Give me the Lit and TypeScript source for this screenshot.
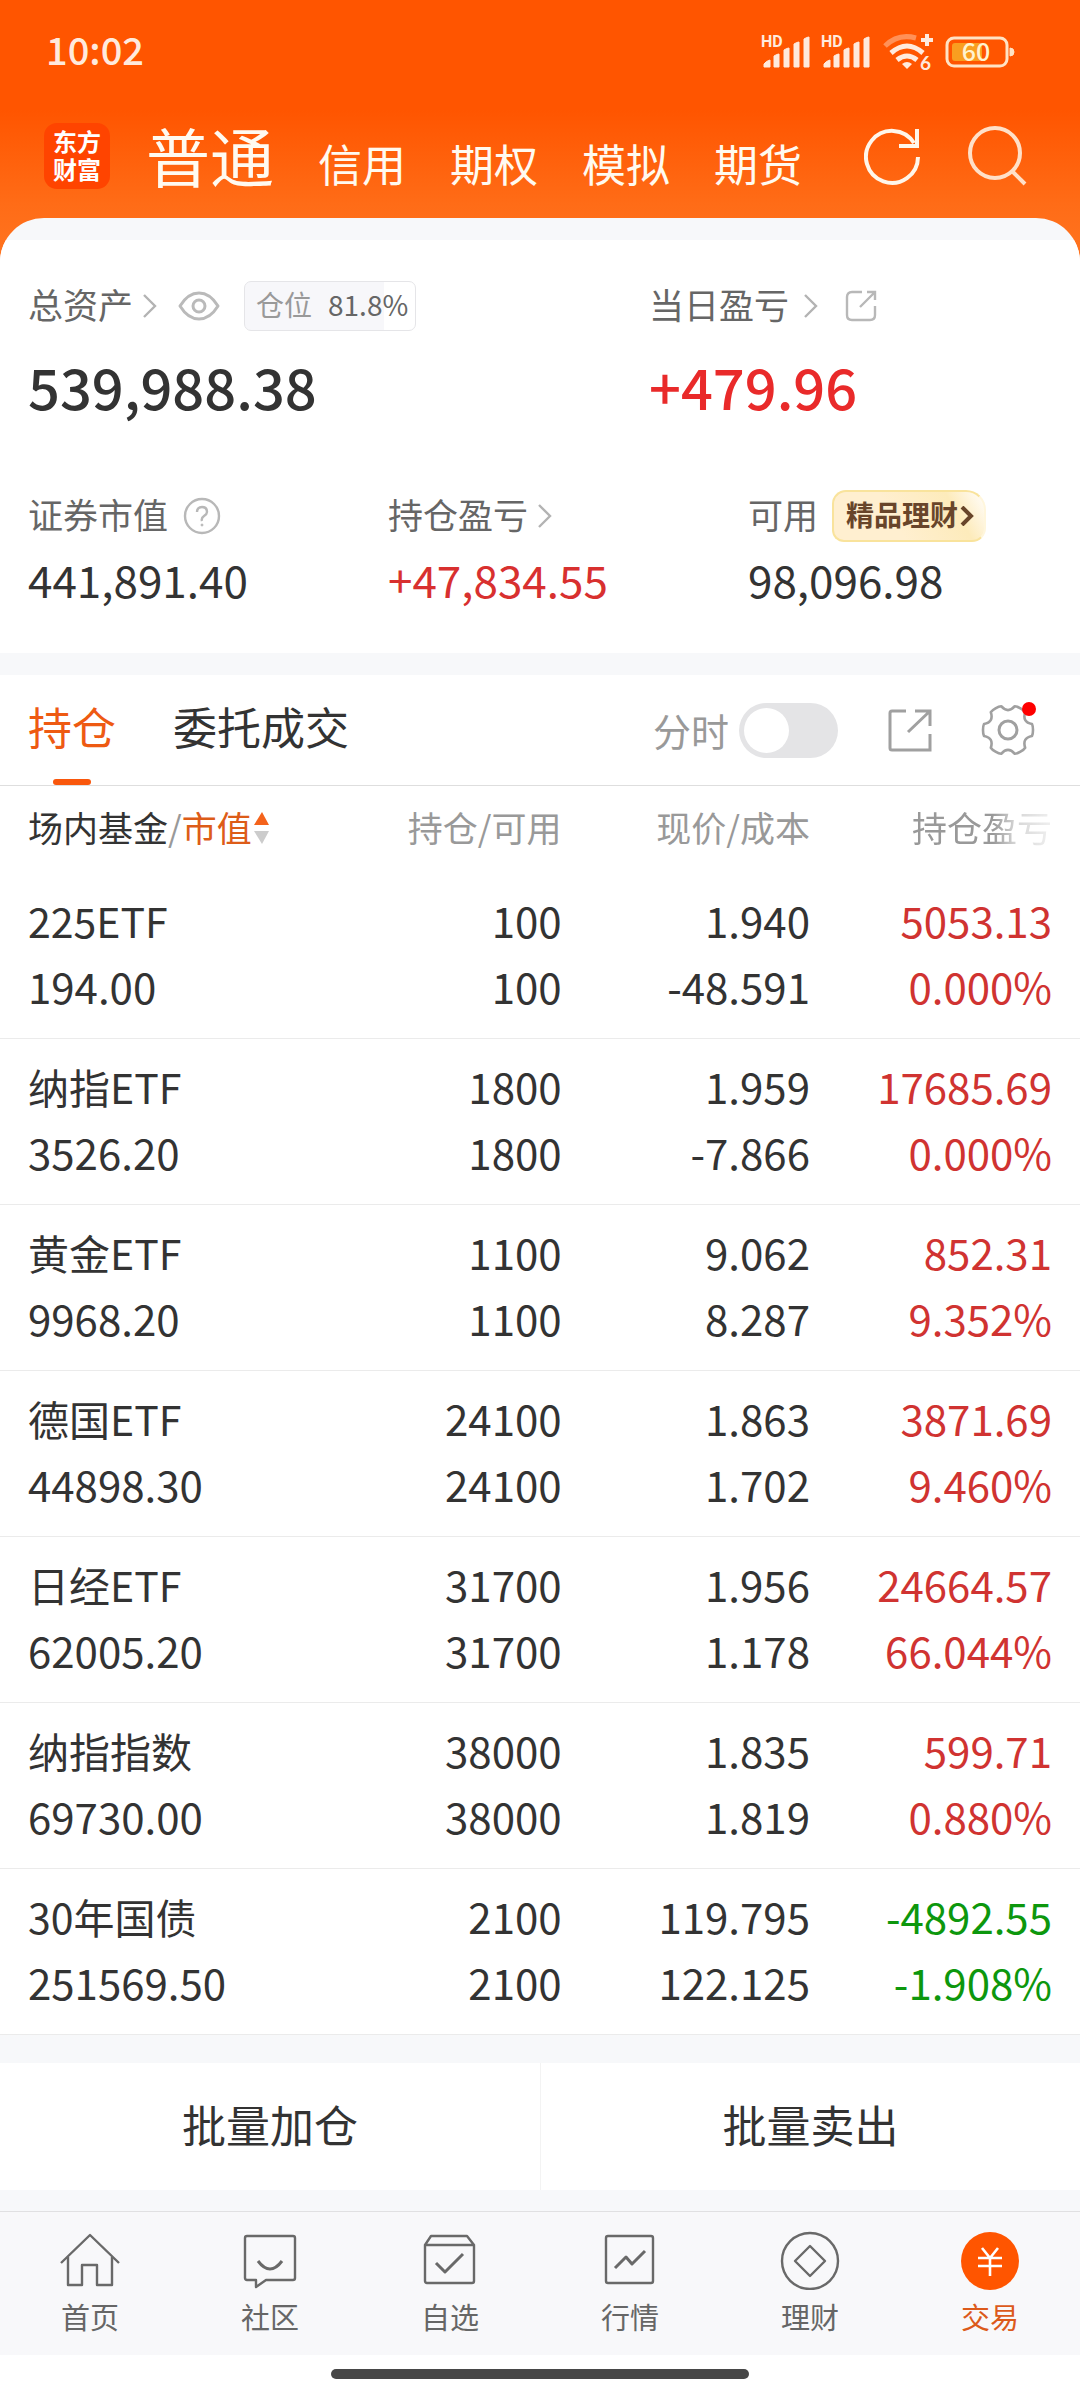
import { LitElement, html, svg, css } from "lit";
import { customElement, property, state } from "lit/decorators.js";
import { classMap } from "lit/directives/class-map.js";

interface Holding {
  name: string;
  value: string;
  held: string;
  usable: string;
  price: string;
  cost: string;
  profit: string;
  rate: string;
}

const HOLDINGS: Holding[] = [
  { name: "225ETF", value: "194.00", held: "100", usable: "100", price: "1.940", cost: "-48.591", profit: "5053.13", rate: "0.000%" },
  { name: "纳指ETF", value: "3526.20", held: "1800", usable: "1800", price: "1.959", cost: "-7.866", profit: "17685.69", rate: "0.000%" },
  { name: "黄金ETF", value: "9968.20", held: "1100", usable: "1100", price: "9.062", cost: "8.287", profit: "852.31", rate: "9.352%" },
  { name: "德国ETF", value: "44898.30", held: "24100", usable: "24100", price: "1.863", cost: "1.702", profit: "3871.69", rate: "9.460%" },
  { name: "日经ETF", value: "62005.20", held: "31700", usable: "31700", price: "1.956", cost: "1.178", profit: "24664.57", rate: "66.044%" },
  { name: "纳指指数", value: "69730.00", held: "38000", usable: "38000", price: "1.835", cost: "1.819", profit: "599.71", rate: "0.880%" },
  { name: "30年国债", value: "251569.50", held: "2100", usable: "2100", price: "119.795", cost: "122.125", profit: "-4892.55", rate: "-1.908%" },
];

/* Outline of a six-lobed gear centred on (cx, cy). */
function gearPath(cx: number, cy: number): string {
  const at = (x: number, y: number, deg: number) => {
    const a = (deg * Math.PI) / 180;
    const px = cx + x * Math.cos(a) - y * Math.sin(a);
    const py = cy + x * Math.sin(a) + y * Math.cos(a);
    return `${px.toFixed(1)} ${py.toFixed(1)}`;
  };
  let d = `M${at(24, -6, 0)}`;
  for (let k = 0; k < 6; k++) {
    const deg = k * 60;
    d += `Q${at(25, -4, deg)} ${at(25, 0, deg)}Q${at(25, 4, deg)} ${at(24, 6, deg)}`;
    d += `Q${at(16, 0, deg + 30)} ${at(24, -6, deg + 60)}`;
  }
  return d + "Z";
}

const chevron = html`<svg class="chevron" viewBox="0 0 14 24" width="14" height="24" aria-hidden="true">
  <path d="M1 1L12 12L1 23" fill="none" stroke="#b3b3b3" stroke-width="2.4" />
</svg>`;

const signal = (x: number) => svg`
  <text x="${x}" y="15" class="hd">HD</text>
  <path d="M${x + 3} 35V32Q${x + 5} 29 ${x + 9} 28V35ZM${x + 13} 35V24Q${x + 16} 22 ${x + 18} 22V35ZM${x + 23} 35V18Q${x + 26} 16 ${x + 28} 16V35ZM${x + 33} 35V12Q${x + 36} 10 ${x + 38} 10V35ZM${x + 43} 35V7Q${x + 46} 5 ${x + 48} 5V35Z"
    fill="#ffeadd" stroke="#ffeadd" stroke-width="1" stroke-linejoin="round" />`;

const TAB_ICONS = {
  home: svg`<path d="M1 35L30 7L59 35M8 29V57H22V37H37V57H52V29" />`,
  community: svg`<path d="M7 8H53Q55 8 55 10V50Q55 52 53 52H26L16 59V52H7Q5 52 5 50V10Q5 8 7 8Z" /><path d="M18 33Q30 49 42 33" stroke-width="3" />`,
  watch: svg`<path d="M5 17L11 8H47L54 17V53Q54 55 52 55H7Q5 55 5 53ZM5 17H54" /><path d="M16 35L25 44L43 26" stroke-width="3" />`,
  market: svg`<rect x="6" y="8" width="47" height="47" rx="2" /><path d="M15 40L26 29L32 36L45 23" stroke-width="3" />`,
  wealth: svg`<circle cx="30" cy="33" r="28" /><path d="M30 18L45 33L30 48L15 33Z" />`,
  trade: svg`<circle cx="30" cy="33" r="29" fill="#ff5500" stroke="none" /><path d="M22 20L30 30L38 20M18 30H42M18 38H42M30 30V48" stroke="#fff" stroke-width="2.6" />`,
};

@customElement("status-bar")
class StatusBar extends LitElement {
  static styles = css`
    :host { display: block; }
    .bar { display: flex; align-items: center; justify-content: space-between; padding: 19px 64px 23px 46px; color: #ffeadd; }
    .time { font-size: 38px; line-height: 60px; font-weight: 500; }
    .hd { font: 700 16px Roboto, "Liberation Sans", sans-serif; fill: #ffeadd; }
    .six { font: 700 19px Lato, sans-serif; fill: #ffeadd; }
    .level { font: 500 25px "Noto Sans CJK SC", sans-serif; fill: #fff3d0; }
    svg { display: block; margin-top: 8px; }
  `;
  render() {
    return html`<div class="bar">
      <span class="time">10:02</span>
      <svg width="256" height="42" viewBox="0 0 256 42" role="img" aria-label="信号与电量">
        ${signal(1)} ${signal(61)}
        <g fill="none" stroke="#ffeadd" stroke-width="5">
          <path d="M125 14Q138 1 156 6" opacity="0.4" />
          <path d="M131 21Q147 7 163 21" />
          <path d="M137 28Q147 20 157 28" />
          <path d="M161 8H173M167 2V14" stroke-width="4" />
        </g>
        <path d="M142 32Q147 28 152 32L147 37Z" fill="#ffeadd" />
        <text x="160" y="38" class="six">6</text>
        <rect x="187" y="6" width="60" height="28" rx="7" fill="none" stroke="#ffe3c4" stroke-width="3" />
        <rect x="192" y="11" width="30" height="18" rx="3" fill="#f99e20" />
        <path d="M250 16Q254 16 254 20Q254 24 250 24Z" fill="#ffe3c4" stroke="#ffe3c4" />
        <text x="216" y="29" text-anchor="middle" class="level">60</text>
      </svg>
    </div>`;
  }
}

@customElement("top-bar")
class TopBar extends LitElement {
  static styles = css`
    :host { display: block; }
    .bar { display: flex; align-items: center; padding: 18px 52px 26px 44px; }
    .logo { display: block; width: 48px; padding: 4px 9px 6px; border-radius: 13px; background: #ff4400; color: #fff; font-size: 24px; line-height: 28px; font-weight: 700; text-decoration: none; }
    .accounts { display: flex; align-items: baseline; gap: 44px; padding: 0 0 4px 36px; }
    .accounts a { color: #fffaf0; font-size: 44px; line-height: 48px; text-decoration: none; white-space: nowrap; }
    .accounts .current { font-size: 64px; line-height: 68px; }
    .tools { display: flex; gap: 44px; margin-left: auto; }
    button { display: block; padding: 0; border: 0; background: none; }
    svg { display: block; }
  `;
  render() {
    return html`<div class="bar">
      <a class="logo" href="#home">东方财富</a>
      <nav class="accounts" aria-label="账户类型">
        <a class="current" href="#normal" aria-current="page">普通</a>
        <a href="#credit">信用</a>
        <a href="#option">期权</a>
        <a href="#demo">模拟</a>
        <a href="#futures">期货</a>
      </nav>
      <div class="tools">
        <button aria-label="刷新">
          <svg width="60" height="60" viewBox="0 0 60 60" fill="none" stroke="#fff6ea" stroke-width="4">
            <path d="M54 31A26 26 0 1 1 50 17M53 3V20H35" />
          </svg>
        </button>
        <button aria-label="搜索">
          <svg width="60" height="60" viewBox="0 0 60 60" fill="none" stroke="#ffe0c8" stroke-width="4">
            <circle cx="27" cy="27" r="25" /><path d="M44 45L57 58" />
          </svg>
        </button>
      </div>
    </div>`;
  }
}

@customElement("account-summary")
class AccountSummary extends LitElement {
  static styles = css`
    :host { display: block; background: #fff; }
    .totals { display: grid; grid-template-columns: 621fr 459fr; padding-top: 41px; }
    .details { display: grid; grid-template-columns: repeat(3, 1fr); padding: 72px 0 48px; }
    .cell { padding-left: 28px; white-space: nowrap; }
    .row { display: flex; align-items: center; min-height: 50px; }
    .details .row { min-height: 52px; }
    .label { display: flex; align-items: center; color: #666; font-size: 35px; line-height: 40px; text-decoration: none; }
    .label span { padding-bottom: 5px; }
    .near { gap: 10px; }
    .far { gap: 15px; }
    .total { margin-top: 23px; font-size: 56px; line-height: 64px; font-weight: 500; color: #333; }
    .amount { margin-top: 11px; font-size: 44px; line-height: 52px; color: #333; }
    .up { color: #e92a2a; }
    .amount.up { color: #d8302f; }
    button { display: block; padding: 0; border: 0; background: none; font: inherit; }
    svg { display: block; }
    .eye { margin-left: 21px; }
    .share { margin-left: 27px; }
    .help { margin-left: 15px; }
    .ratio { display: flex; gap: 16px; margin-left: 24px; padding: 0 7px 4px 11px; border: 1px solid #e5e5e8; border-radius: 7px; background: linear-gradient(to right, #f7f7fa 82%, #fff 82%); color: #999; font-size: 28px; line-height: 44px; }
    .ratio b { color: #666; font-weight: 400; }
    .promo { display: flex; align-items: center; gap: 2px; margin-left: 14px; padding: 0 10px 4px 12px; border: 2px solid #f9e39c; border-right-color: #fff6dc; border-radius: 14px 20px 14px 12px; background: linear-gradient(60deg, #ffefd0 40%, #fdebbb 78%, #fffaf0 96%); color: #68452a; font-size: 28px; line-height: 44px; font-weight: 700; text-decoration: none; }
    .promo svg { margin-top: 4px; }
  `;
  render() {
    return html`
      <div class="totals">
        <div class="cell">
          <div class="row">
            <a class="label near" href="#assets"><span>总资产</span>${chevron}</a>
            <button class="eye" aria-label="隐藏金额">
              <svg width="42" height="30" viewBox="0 0 42 30" fill="none" stroke="#bababa" stroke-width="3">
                <path d="M2 15Q10 2 21 2T40 15Q32 28 21 28T2 15Z" stroke-linejoin="round" /><circle cx="21" cy="15" r="6" />
              </svg>
            </button>
            <div class="ratio"><span>仓位</span><b>81.8%</b></div>
          </div>
          <div class="total">539,988.38</div>
        </div>
        <div class="cell">
          <div class="row">
            <a class="label far" href="#today"><span>当日盈亏</span>${chevron}</a>
            <button class="share" aria-label="分享当日盈亏">
              <svg width="32" height="32" viewBox="0 0 32 32" fill="none" stroke="#b8b8b8" stroke-width="2.4">
                <path d="M17 2H7Q2 2 2 7V25Q2 30 7 30H25Q30 30 30 25V16M22 2H30V10M30 2L15 17" />
              </svg>
            </button>
          </div>
          <div class="total up">+479.96</div>
        </div>
      </div>
      <div class="details">
        <div class="cell">
          <div class="row">
            <span class="label"><span>证券市值</span></span>
            <button class="help" aria-label="证券市值说明">
              <svg width="38" height="38" viewBox="0 0 38 38" fill="none" stroke="#b8b8b8" stroke-width="2.4">
                <circle cx="19" cy="19" r="17" /><path d="M14 15Q14 10 19 10T24 15Q24 17 21 19T19 24" /><circle cx="19" cy="28" r="1" fill="#b8b8b8" stroke-width="1" />
              </svg>
            </button>
          </div>
          <div class="amount">441,891.40</div>
        </div>
        <div class="cell">
          <div class="row"><a class="label near" href="#profit"><span>持仓盈亏</span>${chevron}</a></div>
          <div class="amount up">+47,834.55</div>
        </div>
        <div class="cell">
          <div class="row">
            <span class="label"><span>可用</span></span>
            <a class="promo" href="#wealth">精品理财<svg width="14" height="20" viewBox="0 0 14 20" fill="none" stroke="#68452a" stroke-width="4"><path d="M2 1L11 10L2 19" /></svg></a>
          </div>
          <div class="amount">98,096.98</div>
        </div>
      </div>`;
  }
}

@customElement("holdings-panel")
class HoldingsPanel extends LitElement {
  @state() private tab = 0;

  static styles = css`
    :host { display: block; background: #fff; }
    button { display: block; padding: 0; border: 0; background: none; font: inherit; color: inherit; }
    svg { display: block; overflow: visible; }
    .toolbar { display: flex; align-items: center; justify-content: space-between; padding: 0 46px 0 28px; border-bottom: 1px solid #dedede; }
    .tabs { display: flex; gap: 57px; }
    .tab { display: flex; flex-direction: column; align-items: center; gap: 23px; padding-top: 21px; color: #333; font-size: 44px; line-height: 60px; }
    .tab::after { content: ""; width: 38px; height: 6px; border-radius: 3px; }
    .tab.on { color: #ee5a12; }
    .tab.on::after { background: #f9570c; }
    .tools { display: flex; align-items: center; gap: 50px; }
    .minute { display: flex; align-items: center; gap: 10px; color: #999; font-size: 38px; line-height: 44px; }
    .switch { appearance: none; display: flex; margin: 0; padding: 5px; width: 99px; height: 55px; box-sizing: border-box; border-radius: 28px; background: #e4e4e6; }
    .switch::before { content: ""; width: 45px; border-radius: 50%; background: #fff; }
    .switch:checked { justify-content: flex-end; background: #ff5500; }
    table { width: 100%; border-collapse: separate; border-spacing: 0; table-layout: fixed; color: #333; font-size: 42px; line-height: 66px; text-align: right; }
    th, td { box-sizing: border-box; white-space: nowrap; }
    .c1 { width: 30%; }
    .c2 { width: 22%; }
    .c3 { width: 23%; }
    th { padding: 17px 0 22px; font-size: 35px; line-height: 48px; font-weight: 400; color: #999; }
    td { padding: 14px 0 19px; border-bottom: 1px solid #ebebeb; }
    .name { font-size: 41px; }
    th:first-child, td:first-child { padding-left: 28px; text-align: left; }
    th:last-child, td:last-child { padding-right: 28px; }
    .sort { display: flex; align-items: center; line-height: 48px; }
    .sort b { font-weight: 400; color: #333; }
    .sort em { font-style: normal; color: #dd5c18; }
    .sort svg { margin-top: 2px; }
    .fade { display: inline-block; mask-image: linear-gradient(to right, #000 58%, rgba(0, 0, 0, 0.4) 74%, rgba(0, 0, 0, 0.15)); }
    .up { color: #d03331; }
    .down { color: #0d970d; }
  `;

  render() {
    return html`
      <div class="toolbar">
        <div class="tabs" role="tablist">
          ${["持仓", "委托成交"].map(
            (t, i) => html`<button role="tab" aria-selected=${i === this.tab} class=${classMap({ tab: true, on: i === this.tab })} @click=${() => (this.tab = i)}>${t}</button>`
          )}
        </div>
        <div class="tools">
          <label class="minute" for="minute">分时<input id="minute" class="switch" type="checkbox" role="switch" /></label>
          <button aria-label="分享持仓">
            <svg width="44" height="44" viewBox="0 0 44 44" fill="none" stroke="#a0a0a0" stroke-width="3">
              <path d="M18 3H4Q2 3 2 5V40Q2 42 4 42H42V26M27 3H42V18M42 3L20 24" />
            </svg>
          </button>
          <button aria-label="设置">
            <svg width="52" height="52" viewBox="0 0 52 52" fill="none" stroke="#a0a0a0" stroke-width="2.6" stroke-linejoin="round">
              <path d=${gearPath(26, 26)} /><circle cx="26" cy="26" r="9" stroke-width="3" /><circle cx="47" cy="5" r="7" fill="#fe0000" stroke="none" />
            </svg>
          </button>
        </div>
      </div>
      <table>
        <thead>
          <tr>
            <th class="c1" scope="col">
              <button class="sort"><b>场内基金</b>/<em>市值</em>
                <svg width="18" height="32" viewBox="0 0 18 32" aria-hidden="true"><path d="M10 0L17 13H2Z" fill="#f4631b" /><path d="M2 19H17L10 32Z" fill="#ccc" /></svg>
              </button>
            </th>
            <th class="c2" scope="col">持仓/可用</th>
            <th class="c3" scope="col">现价/成本</th>
            <th scope="col"><span class="fade">持仓盈亏</span></th>
          </tr>
        </thead>
        <tbody>
          ${HOLDINGS.map(
            (h) => html`<tr>
              <td><div class="name">${h.name}</div><div>${h.value}</div></td>
              <td><div>${h.held}</div><div>${h.usable}</div></td>
              <td><div>${h.price}</div><div>${h.cost}</div></td>
              <td class=${h.profit.startsWith("-") ? "down" : "up"}><div>${h.profit}</div><div>${h.rate}</div></td>
            </tr>`
          )}
        </tbody>
      </table>`;
  }
}

@customElement("nav-item")
class NavItem extends LitElement {
  @property() icon: keyof typeof TAB_ICONS = "home";
  @property() label = "";
  @property({ type: Boolean }) active = false;

  static styles = css`
    :host { display: block; }
    a { display: flex; flex-direction: column; align-items: center; gap: 8px; padding: 16px 0 21px; color: #666; font-size: 29px; line-height: 36px; text-decoration: none; }
    a.active { color: #dc5a1b; }
    svg { display: block; }
  `;
  render() {
    return html`<a href="#${this.icon}" class=${classMap({ active: this.active })}>
      <svg width="60" height="62" viewBox="0 0 60 62" fill="none" stroke="#696969" stroke-width="2.4" stroke-linejoin="round" aria-hidden="true">${TAB_ICONS[this.icon]}</svg>
      <span>${this.label}</span>
    </a>`;
  }
}

@customElement("app-root")
class AppRoot extends LitElement {
  static styles = css`
    :host { display: block; min-height: 100vh; background: #fff; font-family: "Noto Sans CJK SC", "Noto Sans", sans-serif; }
    .page { background: linear-gradient(to bottom, #ff5500 110px, #ff6c17 205px, #ff7420 260px); }
    .sheet { overflow: hidden; border-radius: 44px 44px 0 0; background: #f7f8fa; padding-top: 22px; }
    .holdings { display: block; margin-top: 22px; }
    .batch { display: grid; grid-template-columns: 1fr 1fr; margin: 28px 0 21px; background: #fff; }
    .batch button { padding: 31px 0 36px; border: 0; background: none; color: #333; font: inherit; font-size: 44px; line-height: 60px; }
    .batch button + button { border-left: 1px solid #f3f3f3; }
    .nav { display: grid; grid-template-columns: repeat(6, 1fr); border-top: 1px solid #e0e0e2; background: #f8f8fa; }
    .gesture { padding: 14px 0 20px; background: #fff; }
    .pill { width: 418px; height: 10px; margin: 0 auto; border-radius: 5px; background: #474747; }
  `;
  render() {
    return html`<div class="page">
      <status-bar></status-bar>
      <top-bar></top-bar>
      <main class="sheet">
        <account-summary></account-summary>
        <holdings-panel class="holdings"></holdings-panel>
        <div class="batch"><button>批量加仓</button><button>批量卖出</button></div>
        <nav class="nav" aria-label="主导航">
          <nav-item icon="home" label="首页"></nav-item>
          <nav-item icon="community" label="社区"></nav-item>
          <nav-item icon="watch" label="自选"></nav-item>
          <nav-item icon="market" label="行情"></nav-item>
          <nav-item icon="wealth" label="理财"></nav-item>
          <nav-item icon="trade" label="交易" active></nav-item>
        </nav>
        <div class="gesture"><div class="pill"></div></div>
      </main>
    </div>`;
  }
}
